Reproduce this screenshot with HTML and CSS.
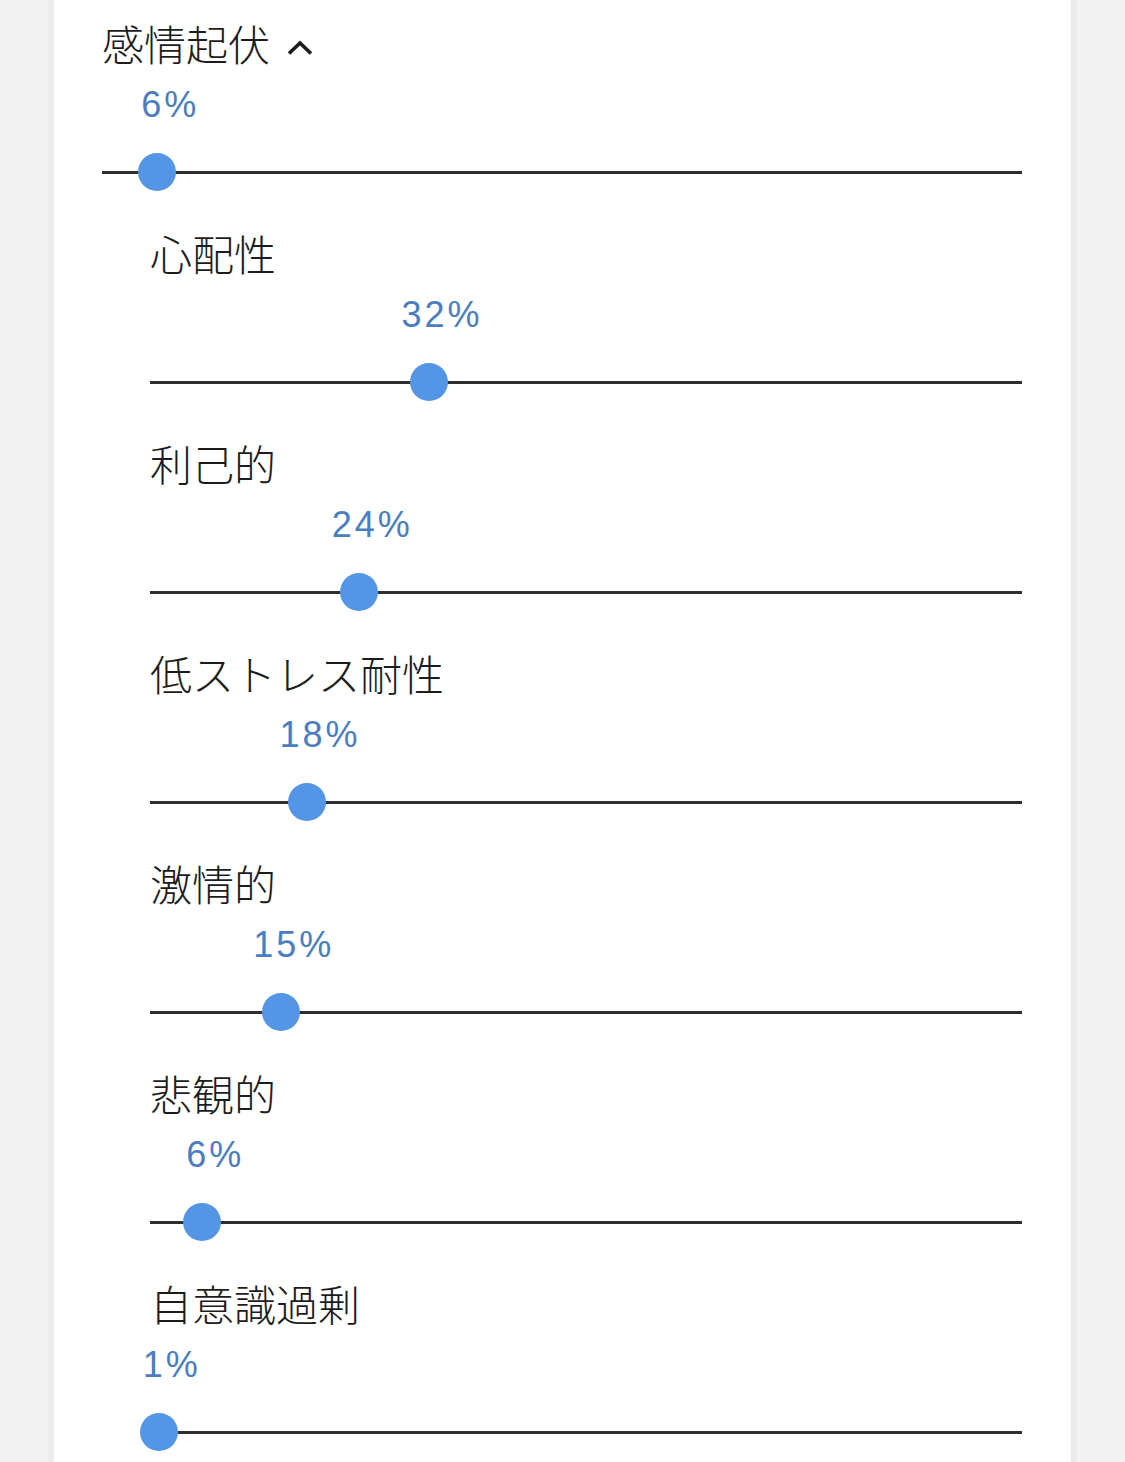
FILE: index.html
```html
<!DOCTYPE html>
<html lang="ja">
<head>
<meta charset="utf-8">
<title>感情起伏</title>
<link rel="stylesheet" href="styles.css">
</head>
<body>
<main class="card">
  <section class="group">
    <div class="item item-head">
      <div class="label">
        <span>感情起伏</span>
        <svg class="chevron" width="28" height="16" viewBox="0 0 28 16" aria-hidden="true">
          <polyline points="3,13.5 14,3 25,13.5" fill="none" stroke="#1c1c1c" stroke-width="3.6"/>
        </svg>
      </div>
      <div class="slider">
        <div class="track">
          <span class="value" style="left:6%">6%</span>
          <span class="thumb" style="left:6%"></span>
        </div>
      </div>
    </div>

    <div class="sub">
      <div class="item">
        <div class="label">心配性</div>
        <div class="slider">
          <div class="track">
            <span class="value" style="left:32%">32%</span>
            <span class="thumb" style="left:32%"></span>
          </div>
        </div>
      </div>

      <div class="item">
        <div class="label">利己的</div>
        <div class="slider">
          <div class="track">
            <span class="value" style="left:24%">24%</span>
            <span class="thumb" style="left:24%"></span>
          </div>
        </div>
      </div>

      <div class="item">
        <div class="label">低ストレス耐性</div>
        <div class="slider">
          <div class="track">
            <span class="value" style="left:18%">18%</span>
            <span class="thumb" style="left:18%"></span>
          </div>
        </div>
      </div>

      <div class="item">
        <div class="label">激情的</div>
        <div class="slider">
          <div class="track">
            <span class="value" style="left:15%">15%</span>
            <span class="thumb" style="left:15%"></span>
          </div>
        </div>
      </div>

      <div class="item">
        <div class="label">悲観的</div>
        <div class="slider">
          <div class="track">
            <span class="value" style="left:6%">6%</span>
            <span class="thumb" style="left:6%"></span>
          </div>
        </div>
      </div>

      <div class="item">
        <div class="label">自意識過剰</div>
        <div class="slider">
          <div class="track">
            <span class="value" style="left:1%">1%</span>
            <span class="thumb" style="left:1%"></span>
          </div>
        </div>
      </div>
    </div>
  </section>
</main>
</body>
</html>
```

FILE: styles.css
```css
html, body {
  margin: 0;
  padding: 0;
  height: 100%;
  overflow: hidden;
}

body {
  background: #f3f3f3;
  font-family: "Liberation Sans", "Noto Sans CJK JP", sans-serif;
  color: #1c1c1c;
}

.card {
  margin: 0 48px;
  min-height: 100%;
  background: #ffffff;
  border-left: 6px solid #ebebeb;
  border-right: 6px solid #ebebeb;
  padding: 18px 49px 0 48px;
  box-sizing: border-box;
}

.sub {
  padding-left: 48px;
}

.label {
  display: flex;
  align-items: center;
  font-family: "Noto Sans CJK JP", sans-serif;
  font-size: 42px;
  font-weight: 300;
  line-height: 50px;
  height: 50px;
  white-space: nowrap;
}

.chevron {
  margin-left: 16px;
  margin-top: 10px;
}

.slider {
  padding: 103px 0 54px;
}

.track {
  position: relative;
  height: 3px;
  background: #2e2e2e;
}

.thumb {
  position: absolute;
  top: calc(50% - 1px);
  width: 38px;
  height: 38px;
  border-radius: 50%;
  background: #5595e5;
  transform: translate(-50%, -50%);
}

.value {
  position: absolute;
  bottom: 49px;
  margin-left: 13px;
  transform: translateX(-50%);
  font-size: 36px;
  line-height: 40px;
  letter-spacing: 3px;
  color: #4a7ec0;
  white-space: nowrap;
}
```
